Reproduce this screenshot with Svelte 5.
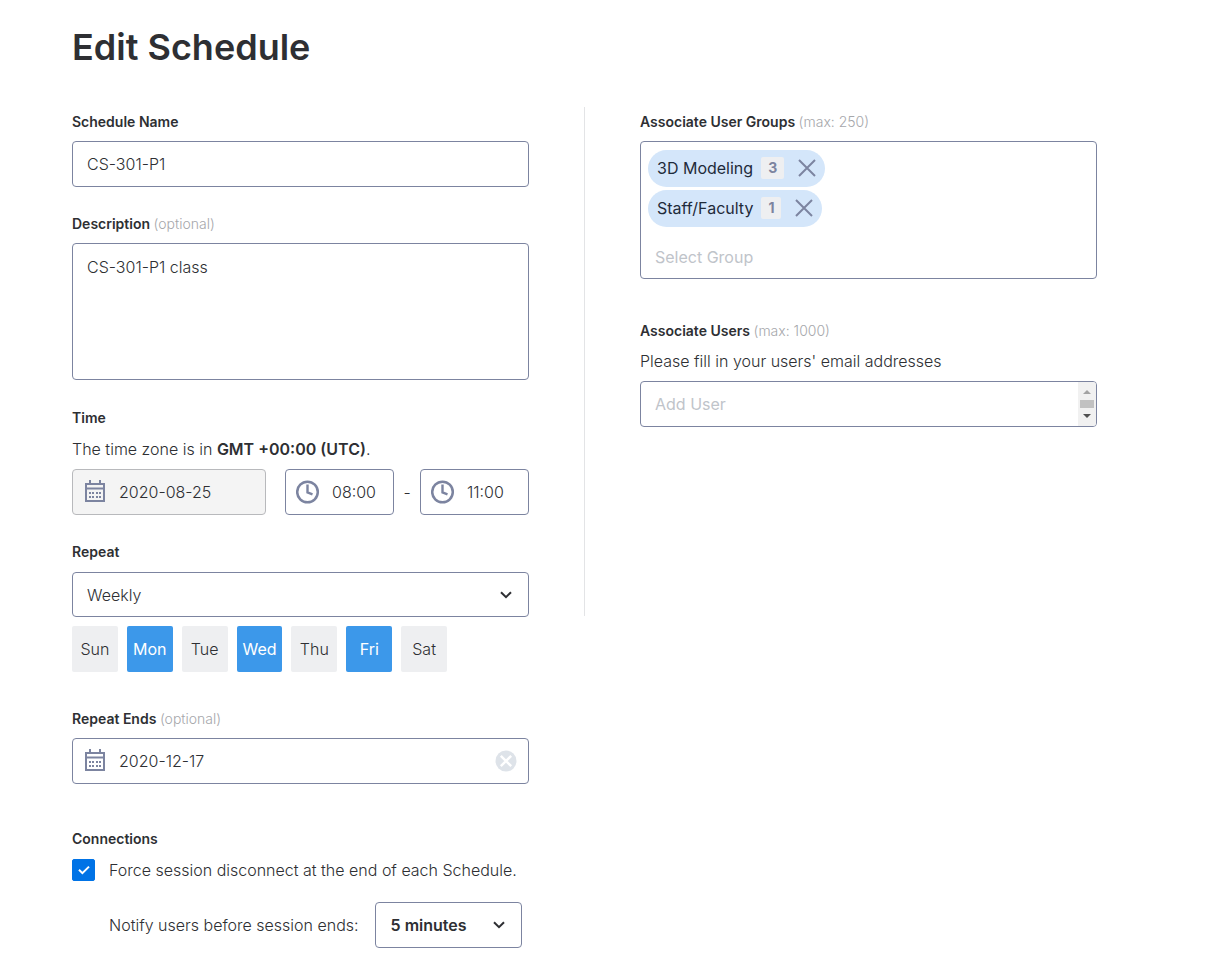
<script lang="ts">
  let name = $state('CS-301-P1');
  let description = $state('CS-301-P1 class');
  let startDate = $state('2020-08-25');
  let startTime = $state('08:00');
  let endTime = $state('11:00');
  let repeat = $state('Weekly');
  let repeatEnds = $state('2020-12-17');
  let forceDisconnect = $state(true);
  let notify = $state('5 minutes');
  let groupQuery = $state('');
  let userQuery = $state('');

  let days = $state([
    { label: 'Sun', active: false },
    { label: 'Mon', active: true },
    { label: 'Tue', active: false },
    { label: 'Wed', active: true },
    { label: 'Thu', active: false },
    { label: 'Fri', active: true },
    { label: 'Sat', active: false }
  ]);

  let groups = $state([
    { name: '3D Modeling', count: 3 },
    { name: 'Staff/Faculty', count: 1 }
  ]);

  function removeGroup(groupName: string) {
    groups = groups.filter((g) => g.name !== groupName);
  }
</script>

{#snippet calendarIcon()}
  <svg class="icon" width="22" height="24" viewBox="0 0 22 24" aria-hidden="true">
    <path d="M2 4h18v17H2z" fill="none" stroke="#7c84a0" stroke-width="2" />
    <path d="M2 8.5h18" stroke="#7c84a0" stroke-width="2" />
    <path d="M6 0v4M16 0v4" stroke="#7c84a0" stroke-width="2" />
    <g fill="#7c84a0">
      {#each [5, 8, 12, 15] as x}
        <rect {x} y="12" width="2" height="2" />
        <rect {x} y="16" width="2" height="2" />
      {/each}
    </g>
  </svg>
{/snippet}

{#snippet clockIcon()}
  <svg class="icon" width="24" height="24" viewBox="0 0 24 24" fill="none" stroke="#7c84a0" aria-hidden="true">
    <circle cx="11.5" cy="12" r="10.3" stroke-width="2.5" />
    <path d="M11.5 4.5v8l5 1.8" stroke-width="2.4" />
  </svg>
{/snippet}

{#snippet chevron()}
  <svg class="chevron" width="12" height="8" viewBox="0 0 12 8" aria-hidden="true">
    <path d="M1 1.2l5 5 5-5" fill="none" stroke="#2e2f33" stroke-width="2" />
  </svg>
{/snippet}

<main class="page">
  <h1>Edit Schedule</h1>

  <form class="columns">
    <div class="column">
      <div class="field">
        <label class="label" for="name">Schedule Name</label>
        <input id="name" class="box" type="text" bind:value={name} />
      </div>

      <div class="field description">
        <label class="label" for="description">Description <span class="hint">(optional)</span></label>
        <textarea id="description" class="box" bind:value={description}></textarea>
      </div>

      <div class="field when">
        <label class="label" for="date">Time</label>
        <p>The time zone is in <strong>GMT +00:00 (UTC)</strong>.</p>
        <div class="time-row">
          <div class="box with-icon date disabled">
            {@render calendarIcon()}
            <input id="date" type="text" bind:value={startDate} readonly />
          </div>
          <div class="box with-icon time">
            {@render clockIcon()}
            <input type="text" aria-label="Start time" bind:value={startTime} />
          </div>
          <span class="dash">-</span>
          <div class="box with-icon time">
            {@render clockIcon()}
            <input type="text" aria-label="End time" bind:value={endTime} />
          </div>
        </div>
      </div>

      <div class="field repeat">
        <label class="label" for="repeat">Repeat</label>
        <div class="select">
          <select id="repeat" class="box" bind:value={repeat}>
            <option>Never</option>
            <option>Daily</option>
            <option>Weekly</option>
          </select>
          {@render chevron()}
        </div>
        <div class="days">
          {#each days as day}
            <button
              type="button"
              class="day"
              class:active={day.active}
              aria-pressed={day.active}
              onclick={() => (day.active = !day.active)}
            >{day.label}</button>
          {/each}
        </div>
      </div>

      <div class="field ends">
        <label class="label" for="ends">Repeat Ends <span class="hint">(optional)</span></label>
        <div class="box with-icon">
          {@render calendarIcon()}
          <input id="ends" type="text" bind:value={repeatEnds} />
          <button type="button" class="clear" aria-label="Clear date" onclick={() => (repeatEnds = '')}>
            <svg width="22" height="22" viewBox="0 0 22 22" aria-hidden="true">
              <circle cx="11" cy="11" r="10.5" fill="#dee3e9" />
              <path d="M5.8 5.8l10.4 10.4M16.2 5.8L5.8 16.2" stroke="#fff" stroke-width="2.4" />
            </svg>
          </button>
        </div>
      </div>

      <div class="field connections">
        <h2 class="label">Connections</h2>
        <label class="check">
          <input type="checkbox" bind:checked={forceDisconnect} />
          <svg class="tick" width="12" height="10" viewBox="0 0 12 10" aria-hidden="true">
            <path d="M1 4.8l3.4 3.4L11 1.6" fill="none" stroke="#fff" stroke-width="2" />
          </svg>
          <span>Force session disconnect at the end of each Schedule.</span>
        </label>
        <div class="notify">
          <label for="notify">Notify users before session ends:</label>
          <div class="select">
            <select id="notify" class="box" bind:value={notify}>
              <option>5 minutes</option>
              <option>10 minutes</option>
              <option>15 minutes</option>
            </select>
            {@render chevron()}
          </div>
        </div>
      </div>
    </div>

    <div class="divider"></div>

    <div class="column">
      <div class="field groups">
        <label class="label" for="groups">Associate User Groups <span class="hint">(max: 250)</span></label>
        <div class="box picker">
          {#each groups as group (group.name)}
            <div class="chip">
              <span>{group.name}</span>
              <span class="count">{group.count}</span>
              <button type="button" aria-label="Remove {group.name}" onclick={() => removeGroup(group.name)}>
                <svg width="18" height="18" viewBox="0 0 18 18" aria-hidden="true">
                  <path d="M1 1l16 16M17 1L1 17" stroke="#7c84a0" stroke-width="2" />
                </svg>
              </button>
            </div>
          {/each}
          <input id="groups" type="text" placeholder="Select Group" bind:value={groupQuery} />
        </div>
      </div>

      <div class="field">
        <label class="label" for="users">Associate Users <span class="hint">(max: 1000)</span></label>
        <p>Please fill in your users' email addresses</p>
        <div class="box users">
          <input id="users" type="text" placeholder="Add User" bind:value={userQuery} />
          <div class="scrollbar">
            <svg width="8" height="4" viewBox="0 0 8 4" aria-hidden="true"><path d="M0 4l4-4 4 4z" fill="#a3a3a3" /></svg>
            <span class="thumb"></span>
            <svg width="8" height="4" viewBox="0 0 8 4" aria-hidden="true"><path d="M0 0l4 4 4-4z" fill="#505050" /></svg>
          </div>
        </div>
      </div>
    </div>
  </form>
</main>

<style>
  :global(body) {
    margin: 0;
    background: #fff;
  }

  .page {
    padding: 23px 121px 0 72px;
    color: #2e2f33;
    font: 300 16px/22px Inter, sans-serif;
  }

  input,
  textarea,
  select,
  button {
    box-sizing: border-box;
    margin: 0;
    padding: 0;
    border: 0;
    background: none;
    color: inherit;
    font: inherit;
    outline: none;
  }

  h1 {
    margin: 0 0 36px;
    font-size: 36px;
    font-weight: 600;
    line-height: 48px;
  }

  .columns {
    display: flex;
    align-items: flex-start;
  }

  .column {
    flex: 1;
    min-width: 0;
    padding-top: 5px;
  }

  .divider {
    width: 1px;
    height: 509px;
    margin: 0 55px;
    background: #e3e4e6;
  }

  .field {
    margin-bottom: 27px;
  }

  .field.description {
    margin-bottom: 28px;
  }

  .field.repeat {
    margin-bottom: 37px;
  }

  .field.ends {
    margin-bottom: 45px;
  }

  .field.groups {
    margin-bottom: 42px;
  }

  .label {
    display: block;
    margin: 0 0 9px;
    font-size: 14px;
    font-weight: 600;
    line-height: 20px;
  }

  .when .label,
  .repeat .label,
  .connections .label {
    margin-bottom: 10px;
  }

  .hint {
    color: #a6a7ab;
    font-weight: 300;
  }

  p {
    margin: 0 0 9px;
  }

  strong {
    font-weight: 600;
  }

  .box {
    display: block;
    box-sizing: border-box;
    width: 100%;
    height: 46px;
    border: 1px solid #7c84a0;
    border-radius: 4px;
    padding: 0 14px;
    background: #fff;
  }

  textarea.box {
    height: 137px;
    padding: 12px 14px;
    resize: none;
  }

  .with-icon {
    display: flex;
    align-items: center;
    padding: 0 11px;
  }

  .with-icon .icon {
    flex: none;
    margin-right: 13px;
  }

  .with-icon input {
    flex: 1;
    width: 0;
    min-width: 0;
  }

  .time-row {
    display: flex;
    align-items: center;
  }

  .date {
    flex: 1;
    margin-right: 19px;
  }

  .date.disabled {
    border-color: #b8b9bc;
    background: #f4f4f4;
  }

  .time {
    width: 109px;
    padding: 0 10px;
  }

  .time .icon {
    margin-right: 12px;
  }

  .dash {
    width: 26px;
    text-align: center;
  }

  .select {
    position: relative;
  }

  .select select {
    appearance: none;
  }

  .repeat select {
    height: 45px;
  }

  .select .chevron {
    position: absolute;
    top: 19px;
    right: 17px;
    pointer-events: none;
  }

  .days {
    display: flex;
    gap: 9px;
    max-width: 375px;
    margin-top: 9px;
  }

  .day {
    flex: 1;
    height: 46px;
    border-radius: 2px;
    background: #eeeff1;
  }

  .day.active {
    background: #3c98ea;
    color: #fff;
    font-weight: 400;
  }

  .clear {
    display: flex;
  }

  .check {
    display: flex;
    position: relative;
    align-items: center;
    gap: 14px;
  }

  .check input {
    appearance: none;
    flex: none;
    width: 23px;
    height: 22px;
    border: 1px solid #7c84a0;
    border-radius: 2px;
  }

  .check input:checked {
    border-color: #0073e6;
    background: #0073e6;
  }

  .check .tick {
    position: absolute;
    top: 6px;
    left: 6px;
    pointer-events: none;
  }

  .notify {
    display: flex;
    align-items: center;
    gap: 16px;
    margin: 21px 0 0 37px;
  }

  .notify .select {
    width: 147px;
  }

  .notify select {
    padding: 0 15px;
    font-weight: 600;
  }

  .picker {
    display: flex;
    flex-direction: column;
    align-items: flex-start;
    gap: 3px;
    height: auto;
    padding: 8px 7px;
  }

  .picker > input {
    width: 100%;
    height: 22px;
    margin: 16px 0 2px;
    padding: 0 7px;
  }

  .chip {
    display: flex;
    align-items: center;
    box-sizing: border-box;
    height: 37px;
    padding: 0 9px 1px;
    border-radius: 19px;
    background: #d4e6fa;
    color: #1f2b3a;
    font-weight: 400;
  }

  .chip .count {
    margin: 0 14px 0 8px;
    padding: 0 7px;
    border-radius: 2px;
    background: #eeeff1;
    color: #7c84a0;
    font-size: 14px;
    font-weight: 700;
  }

  .chip button {
    display: flex;
  }

  ::placeholder {
    color: #bfc4ca;
    font-weight: 400;
    opacity: 1;
  }

  .users {
    display: flex;
    padding: 0 0 0 14px;
    overflow: hidden;
  }

  .users input {
    flex: 1;
    min-width: 0;
  }

  .scrollbar {
    display: flex;
    flex-direction: column;
    align-items: center;
    justify-content: space-between;
    width: 18px;
    padding: 8px 0;
    box-sizing: border-box;
    background: #f1f1f1;
  }

  .thumb {
    width: 14px;
    height: 8px;
    background: #c1c1c1;
  }
</style>
